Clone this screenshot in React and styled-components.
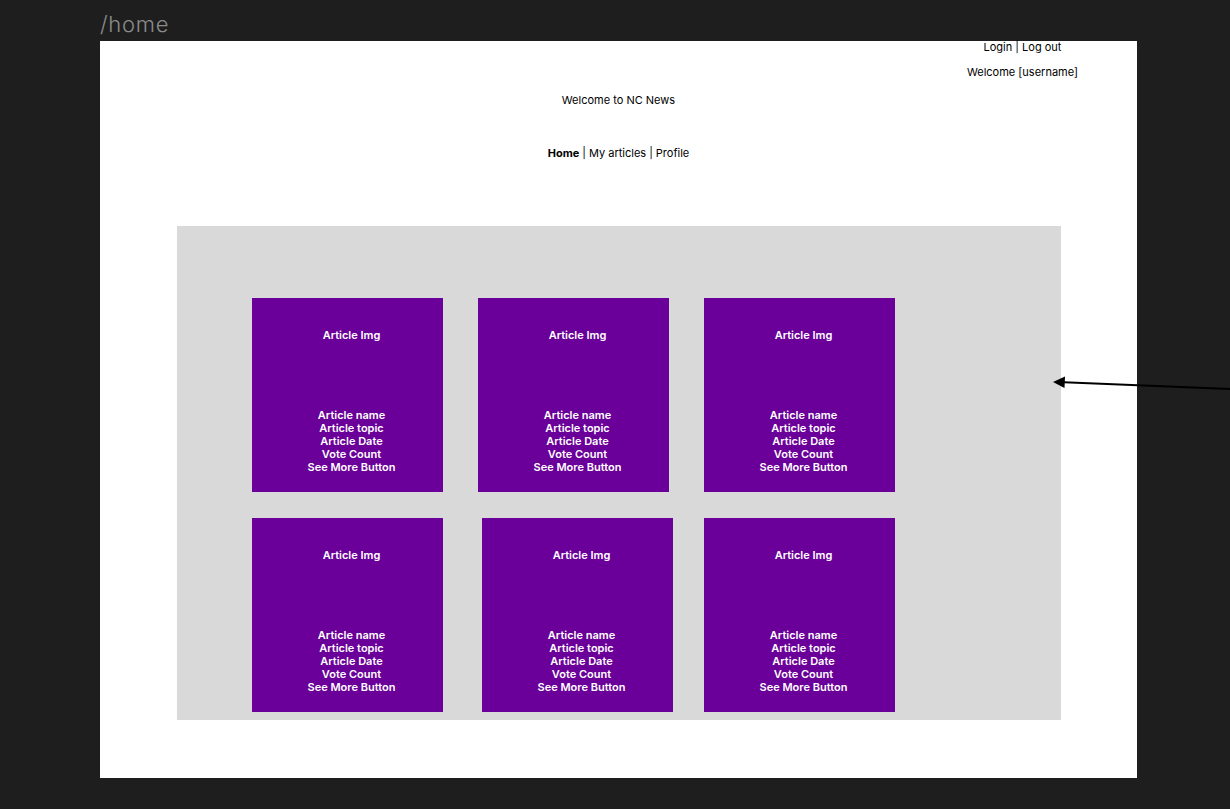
import React from "react";
import styled, { createGlobalStyle } from "styled-components";

const Global = createGlobalStyle`
  html, body { margin: 0; padding: 0; background: #1e1e1e; }
  body { font-family: Inter, "Noto Sans", sans-serif; }
  #root { min-height: 809px; }
`;

const Canvas = styled.div`
  position: relative;
  width: 1230px;
  height: 809px;
  overflow: hidden;
  padding-left: 100px;
  box-sizing: border-box;
`;

const FrameLabel = styled.div`
  height: 41px;
  box-sizing: border-box;
  padding-top: 11px;
  font-size: 22px;
  line-height: 26px;
  font-weight: 300;
  color: #8c8c8c;
  letter-spacing: 0.7px;
`;

const Frame = styled.div`
  width: 1037px;
  height: 737px;
  background: #ffffff;
  display: flex;
  flex-direction: column;
  align-items: center;
  font-size: 11px;
  line-height: 13px;
  color: #000;
`;

const Account = styled.div`
  align-self: flex-end;
  margin-right: 59px;
  display: flex;
  flex-direction: column;
  align-items: center;
  gap: 12px;
`;

const Line = styled.div`
  white-space: nowrap;
`;

const Title = styled.div`
  margin-top: 15px;
`;

const Nav = styled.nav`
  margin-top: 40px;
  display: flex;
  gap: 3px;
  white-space: nowrap;
`;

const NavItem = styled.span`
  font-weight: ${(p) => (p.$active ? 700 : 400)};
`;

const Board = styled.div`
  align-self: stretch;
  margin: 66px 76px 0 77px;
  height: 494px;
  background: #d9d9d9;
  padding: 72px 0 0 75px;
  box-sizing: border-box;
  display: flex;
  flex-direction: column;
  gap: 26px;
`;

const Row = styled.div`
  display: flex;
  gap: 35px;
`;

const Card = styled.div`
  width: 191px;
  height: 194px;
  background: #6a0099;
  color: #fff;
  font-weight: 600;
  font-size: 11px;
  line-height: 13px;
  display: flex;
  flex-direction: column;
  align-items: center;
  padding: 31px 0 0 8px;
  box-sizing: border-box;
  margin-left: ${(p) => p.$offset || 0}px;
  margin-right: ${(p) => -(p.$offset || 0)}px;
`;

const Details = styled.div`
  margin-top: 67px;
  display: flex;
  flex-direction: column;
  align-items: center;
`;

const Arrow = styled.svg`
  position: absolute;
  left: 1040px;
  top: 370px;
  width: 190px;
  height: 30px;
`;

const ArticleCard = ({ offset }) => (
  <Card $offset={offset}>
    <Line>Article Img</Line>
    <Details>
      <Line>Article name</Line>
      <Line>Article topic</Line>
      <Line>Article Date</Line>
      <Line>Vote Count</Line>
      <Line>See More Button</Line>
    </Details>
  </Card>
);

export default function App() {
  return (
    <>
      <Global />
      <Canvas>
        <FrameLabel>/home</FrameLabel>
        <Frame>
          <Account>
            <Line>Login | Log out</Line>
            <Line>Welcome [username]</Line>
          </Account>
          <Title>Welcome to NC News</Title>
          <Nav>
            <NavItem $active>Home</NavItem>
            <NavItem>|</NavItem>
            <NavItem>My articles</NavItem>
            <NavItem>|</NavItem>
            <NavItem>Profile</NavItem>
          </Nav>
          <Board>
            <Row>
              <ArticleCard />
              <ArticleCard />
              <ArticleCard />
            </Row>
            <Row>
              <ArticleCard />
              <ArticleCard offset={4} />
              <ArticleCard />
            </Row>
          </Board>
        </Frame>
        <Arrow viewBox="0 0 190 30">
          <line x1="24" y1="12.3" x2="192" y2="19" stroke="#000" strokeWidth="2" />
          <polygon points="13,12 25,6.5 24.5,18" fill="#000" />
        </Arrow>
      </Canvas>
    </>
  );
}
